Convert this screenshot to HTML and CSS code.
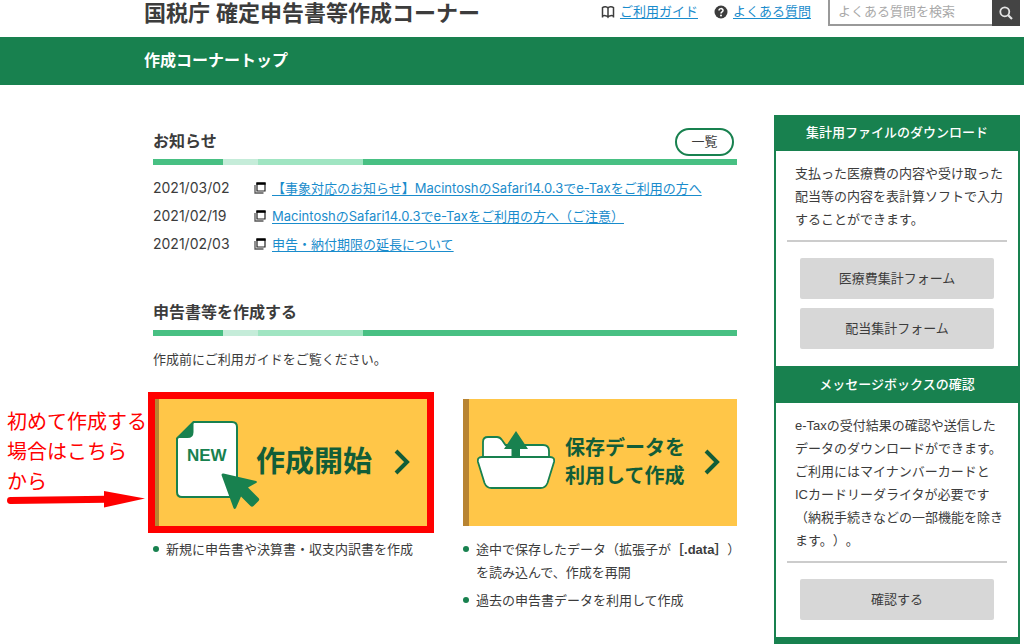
FILE: index.html
```html
<!DOCTYPE html>
<html lang="ja">
<head>
<meta charset="utf-8">
<title>国税庁 確定申告書等作成コーナー</title>
<link rel="stylesheet" href="styles.css">
</head>
<body>
<header class="site-header">
  <h1 class="site-title">国税庁 確定申告書等作成コーナー</h1>
  <nav class="site-nav">
    <span class="nav-item">
      <svg class="nav-icon" viewBox="0 0 14 14" fill="none" stroke="#3c3c3c" stroke-width="1.5"><path d="M7 3C6 1.500 3 1.500 1.500 2.600V12.500M7 3C8 1.500 11 1.500 12.500 2.600V12.500M7 3v9.500M1 11.300C3 10.300 6 10.300 7 12 8 10.300 11 10.300 13 11.300"/></svg>
      <a href="#guide">ご利用ガイド</a>
    </span>
    <span class="nav-item">
      <svg class="nav-icon" viewBox="0 0 14 14"><circle cx="7" cy="7" r="6.500" fill="#3c3c3c"/><path d="M5 5.600C5 3 9 3 9 5.400 9 6.900 7 6.800 7 8.500" fill="none" stroke="#fff" stroke-width="1.500"/><circle cx="7" cy="10.500" r="1" fill="#fff"/></svg>
      <a href="#faq">よくある質問</a>
    </span>
  </nav>
  <form class="search">
    <input class="search-input" type="text" placeholder="よくある質問を検索" aria-label="よくある質問を検索">
    <button class="search-button" type="button" aria-label="検索">
      <svg width="14" height="14" viewBox="0 0 14 14" fill="none" stroke="#e4e4e4" stroke-width="1.800"><circle cx="5.800" cy="5.800" r="4.500"/><path d="M9.200 9.200L13 13" stroke-width="2.200"/></svg>
    </button>
  </form>
</header>
<div class="page-bar">作成コーナートップ</div>
<div class="layout">
  <main class="content">
    <section class="news">
      <div class="section-head">
        <h2 class="section-title">お知らせ</h2>
        <button class="list-button" type="button">一覧</button>
      </div>
      <ul class="news-list">
        <li class="news-item"><time class="news-date">2021/03/02</time>
          <svg class="window-icon" viewBox="0 0 12 12"><path d="M1 3v8h8.500" fill="none" stroke="#555" stroke-width="1.300"/><path d="M3 1h8v8H3z" fill="#fff" stroke="#222" stroke-width="1.200"/><path d="M2.400 .4h9.200v2.400H2.400z" fill="#000"/></svg>
          <a href="#n1">【事象対応のお知らせ】MacintoshのSafari14.0.3でe-Taxをご利用の方へ</a></li>
        <li class="news-item"><time class="news-date">2021/02/19</time>
          <svg class="window-icon" viewBox="0 0 12 12"><path d="M1 3v8h8.500" fill="none" stroke="#555" stroke-width="1.300"/><path d="M3 1h8v8H3z" fill="#fff" stroke="#222" stroke-width="1.200"/><path d="M2.400 .4h9.200v2.400H2.400z" fill="#000"/></svg>
          <a href="#n2">MacintoshのSafari14.0.3でe-Taxをご利用の方へ（ご注意）</a></li>
        <li class="news-item"><time class="news-date">2021/02/03</time>
          <svg class="window-icon" viewBox="0 0 12 12"><path d="M1 3v8h8.500" fill="none" stroke="#555" stroke-width="1.300"/><path d="M3 1h8v8H3z" fill="#fff" stroke="#222" stroke-width="1.200"/><path d="M2.400 .4h9.200v2.400H2.400z" fill="#000"/></svg>
          <a href="#n3">申告・納付期限の延長について</a></li>
      </ul>
    </section>
    <section class="create">
      <div class="section-head">
        <h2 class="section-title">申告書等を作成する</h2>
      </div>
      <p class="lead">作成前にご利用ガイドをご覧ください。</p>
      <div class="options">
        <div class="option option-marked">
          <a class="card card-new" href="#start">
            <svg class="card-icon" width="84" height="92" viewBox="0 0 84 92">
              <path d="M17.500 1H56q5 0 5 5v65q0 5-5 5H6q-5 0-5-5V17.500z" fill="#fff" stroke="#18814f" stroke-width="2"/>
              <path d="M17.500 1v10q0 6-6 6H1z" fill="#18814f"/>
              <text class="new-label" x="11" y="40">NEW</text>
              <path d="M45.500 54q0-2 2-1.500L80 60q2 1 0 2l-8 4.500L82.500 77q1.500 1.500 0 3l-5 5q-1.500 1.500-3 0L65 75.500 60 87q-1.500 2-2.500 0z" fill="#18814f"/>
            </svg>
            <span class="card-text card-text-large">作成開始</span>
            <svg class="chevron" width="16" height="26" viewBox="0 0 16 26"><path d="M2 2l11 11L2 24" fill="none" stroke="#125d38" stroke-width="4"/></svg>
          </a>
          <ul class="notes"><li>新規に申告書や決算書・収支内訳書を作成</li></ul>
          <div class="memo">初めて作成する<br>場合はこちら<br>から
            <svg class="memo-arrow" width="140" height="18" viewBox="0 0 140 18"><path d="M3.500 10.500L99 9.300" stroke="#f00" stroke-width="7" stroke-linecap="round"/><path d="M97 1l41 7.500L97 17.500z" fill="#f00"/></svg>
          </div>
        </div>
        <div class="option">
          <a class="card card-saved" href="#resume">
            <svg class="card-icon" width="78" height="60" viewBox="0 0 78 60">
              <path d="M6 27V12q0-5 5-5h9q3 0 5 3l3.500 5H66q6 0 6 6v8z" fill="#fff" stroke="#18814f" stroke-width="1.800"/>
              <path d="M39 1L51 19h-8v9h-8.500v-9H27z" fill="#18814f"/>
              <path d="M5 27h68q5 0 4 5l-6.500 21q-2 5-7 5h-49q-5 0-7-5L1 32q-1-5 4-5z" fill="#fff" stroke="#18814f" stroke-width="1.800"/>
            </svg>
            <span class="card-text">保存データを<br>利用して作成</span>
            <svg class="chevron" width="16" height="26" viewBox="0 0 16 26"><path d="M2 2l11 11L2 24" fill="none" stroke="#125d38" stroke-width="4"/></svg>
          </a>
          <ul class="notes">
            <li>途中で保存したデータ（拡張子が<b>［.data］</b>）<br>を読み込んで、作成を再開</li>
            <li>過去の申告書データを利用して作成</li>
          </ul>
        </div>
      </div>
    </section>
  </main>
  <aside class="sidebar">
    <section>
      <h2 class="side-title">集計用ファイルのダウンロード</h2>
      <div class="side-body">
        <p class="side-text">支払った医療費の内容や受け取った<br>配当等の内容を表計算ソフトで入力<br>することができます。</p>
        <div class="side-actions">
          <button class="side-button" type="button">医療費集計フォーム</button>
          <button class="side-button" type="button">配当集計フォーム</button>
        </div>
      </div>
    </section>
    <section>
      <h2 class="side-title">メッセージボックスの確認</h2>
      <div class="side-body">
        <p class="side-text">e-Taxの受付結果の確認や送信した<br>データのダウンロードができます。<br>ご利用にはマイナンバーカードと<br>ICカードリーダライタが必要です<br>（納税手続きなどの一部機能を除き<br>ます。）。</p>
        <div class="side-actions">
          <button class="side-button" type="button">確認する</button>
        </div>
      </div>
    </section>
  </aside>
</div>
</body>
</html>
```

FILE: styles.css
```css
* { box-sizing: border-box; }
body {
  margin: 0;
  background: #fff;
  color: #3c3c3c;
  font-family: "Liberation Sans", "Noto Sans CJK JP", sans-serif;
  font-size: 13px;
  line-height: 23px;
  text-spacing-trim: space-all;
}
h1, h2, p, ul { margin: 0; padding: 0; }
ul { list-style: none; }
a { color: #1a8ccc; text-underline-offset: 2px; }
button, input { font: inherit; color: inherit; }

.site-header {
  display: flex;
  align-items: flex-start;
  height: 37px;
  padding: 0 4px 0 144px;
}
.site-title {
  flex: 1;
  font-size: 22px;
  line-height: 28px;
  font-weight: 700;
  white-space: nowrap;
}
.site-nav { display: flex; gap: 16px; margin-right: 17px; }
.nav-item { display: flex; align-items: center; gap: 5px; white-space: nowrap; }
.nav-icon { width: 14px; height: 14px; }
.search { display: flex; width: 192px; height: 26px; }
.search-input {
  flex: 1;
  min-width: 0;
  border: 1px solid #999;
  border-width: 0 0 2px 2px;
  padding: 0 8px 2px;
  background: #fff;
}
.search-input::placeholder { color: #a9a9a9; opacity: 1; }
.search-button {
  display: flex;
  align-items: center;
  justify-content: center;
  width: 28px;
  padding: 0;
  border: 0;
  background: #444;
}

.page-bar {
  padding: 12px 144px;
  background: #18814f;
  color: #fff;
  font-size: 16px;
  line-height: 24px;
  font-weight: 700;
}

.layout { display: flex; gap: 37px; padding: 30px 4px 0 153px; }
.content { flex: 1; min-width: 0; }

.section-head {
  display: flex;
  align-items: center;
  justify-content: space-between;
  padding: 0 3px 11px 0;
  background: linear-gradient(to right, #48c083 12%, #c5ecd9 12% 18%, #a0e5c2 18% 36%, #48c083 36%) bottom / 100% 6px no-repeat;
}
.section-title { font-size: 16px; line-height: 24px; font-weight: 700; }
.news { padding-top: 15px; }
.list-button {
  width: 59px;
  height: 28px;
  margin: -2px 0;
  padding: 0;
  border: 2px solid #18814f;
  border-radius: 14px;
  background: #fff;
  line-height: 20px;
}
.news-list { padding-top: 9px; font-family: Inter, "Noto Sans CJK JP", sans-serif; }
.news-item { display: flex; align-items: center; line-height: 28px; white-space: nowrap; }
.news-date { width: 101px; font-size: 14px; }
.window-icon { width: 12px; height: 12px; margin-right: 6px; }

.create { padding-top: 43px; }
.lead { padding: 12px 0 28px; }
.options { display: grid; grid-template-columns: repeat(2, minmax(0, 1fr)); gap: 36px; }
.option { position: relative; }
.card {
  position: relative;
  display: flex;
  align-items: center;
  height: 127px;
  border-left: 6px solid #b88432;
  background: #ffc648;
  color: #125d38;
  text-decoration: none;
}
.card-new { padding: 0 17px 2px; }
.card-new .card-icon { margin-top: 10px; }
.card-saved { padding: 0 17px 2px 8px; }
.card-text { margin-left: 10px; font-size: 20px; line-height: 28px; font-weight: 700; white-space: nowrap; }
.card-text-large { margin-left: -4px; font-size: 29px; }
.card-icon { flex: none; }
.card-saved .card-icon { margin-bottom: 4px; }
.chevron { flex: none; margin-left: auto; }
.option-marked .card::after {
  content: "";
  position: absolute;
  inset: -7px -7px -7px -11px;
  border: 7px solid #f00;
}
.new-label { font-family: "Liberation Sans", sans-serif; font-size: 17px; font-weight: 700; fill: #18814f; }
.memo {
  position: absolute;
  top: 8px;
  right: 100%;
  width: 146px;
  color: #f00;
  font-size: 20px;
  line-height: 30px;
  white-space: nowrap;
}
.memo-arrow { position: absolute; left: 0; top: 83px; }
.notes { display: grid; gap: 5px; padding-top: 12px; }
.notes li { position: relative; padding-left: 13px; white-space: nowrap; }
.notes li::before {
  content: "";
  position: absolute;
  left: 0;
  top: 8px;
  width: 6px;
  height: 6px;
  border-radius: 50%;
  background: #18814f;
}

.sidebar {
  flex: none;
  width: 246px;
  border: solid #18814f;
  border-width: 0 2px 7px;
}
.side-title {
  padding: 6px 0;
  background: #18814f;
  color: #fff;
  font-size: 13px;
  line-height: 24px;
  font-weight: 500;
  text-align: center;
}
.side-body { padding: 11px 11px 17px; }
.side-text { padding: 0 0 9px 8px; border-bottom: 2px solid #ccc; white-space: nowrap; }
section + section .side-title { line-height: 25px; }
.side-actions { display: grid; gap: 9px; padding: 16px 13px 0; }
.side-button { height: 41px; padding: 0; border: 0; border-radius: 2px; background: #d7d7d7; }
```
